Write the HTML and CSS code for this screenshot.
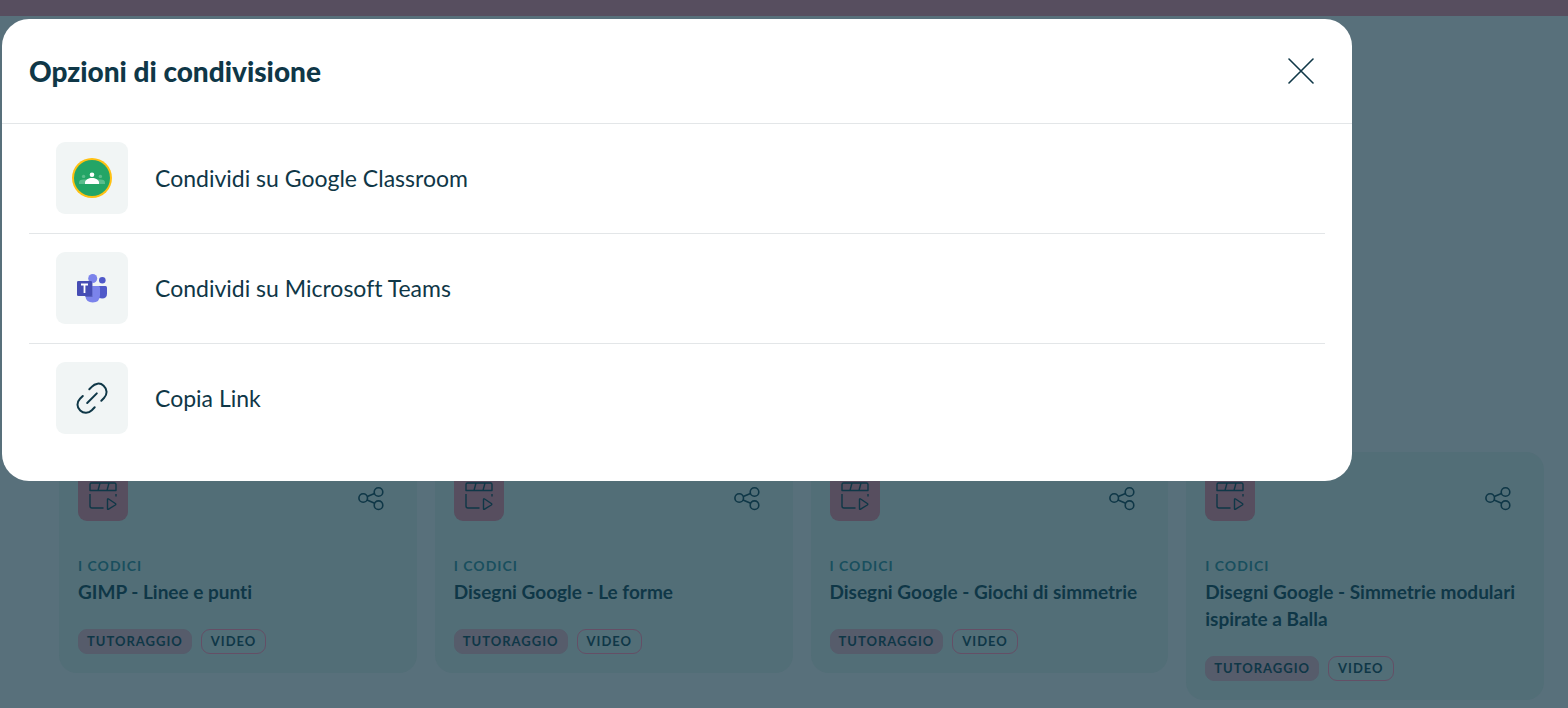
FILE: index.html
```html
<!DOCTYPE html>
<html lang="it">
<head>
<meta charset="utf-8">
<meta name="viewport" content="width=device-width, initial-scale=1">
<title>Opzioni di condivisione</title>
<link rel="stylesheet" href="styles.css">
</head>
<body>
<svg class="sprite" aria-hidden="true">
  <symbol id="video" viewBox="0 0 30 30">
    <path d="M2 9.500V3.500Q2 2 3.500 2H26.500Q28 2 28 3.500V9.500Z M12 2 10 9.500 M21 2 19 9.500 M2 13V25Q2 27 4 27H15.500 M28 13V15.500 M19.500 18.500V27.500Q19.500 28.800 20.600 28.100L27.300 24Q28.300 23.200 27.300 22.500L20.600 18Q19.500 17.400 19.500 18.500Z"/>
  </symbol>
  <symbol id="share" viewBox="0 0 26 26">
    <circle cx="5.200" cy="13" r="4.300"/><circle cx="20.500" cy="7" r="4.300"/><circle cx="20.500" cy="20.200" r="4.300"/>
    <path d="M9.300 11.500 16.500 8.600 M9 15 16.700 18.300"/>
  </symbol>
</svg>
<header class="topbar"></header>
<main class="results">
  <article class="card">
    <div class="card-top"><span class="type"><svg><use href="#video"/></svg></span><button class="share" aria-label="Condividi"><svg><use href="#share"/></svg></button></div>
    <p class="series">I CODICI</p>
    <h2 class="title">GIMP - Linee e punti</h2>
    <div class="tags"><span class="tag filled">TUTORAGGIO</span><span class="tag">VIDEO</span></div>
  </article>
  <article class="card">
    <div class="card-top"><span class="type"><svg><use href="#video"/></svg></span><button class="share" aria-label="Condividi"><svg><use href="#share"/></svg></button></div>
    <p class="series">I CODICI</p>
    <h2 class="title">Disegni Google - Le forme</h2>
    <div class="tags"><span class="tag filled">TUTORAGGIO</span><span class="tag">VIDEO</span></div>
  </article>
  <article class="card">
    <div class="card-top"><span class="type"><svg><use href="#video"/></svg></span><button class="share" aria-label="Condividi"><svg><use href="#share"/></svg></button></div>
    <p class="series">I CODICI</p>
    <h2 class="title">Disegni Google - Giochi di simmetrie</h2>
    <div class="tags"><span class="tag filled">TUTORAGGIO</span><span class="tag">VIDEO</span></div>
  </article>
  <article class="card">
    <div class="card-top"><span class="type"><svg><use href="#video"/></svg></span><button class="share" aria-label="Condividi"><svg><use href="#share"/></svg></button></div>
    <p class="series">I CODICI</p>
    <h2 class="title">Disegni Google - Simmetrie modulari ispirate a Balla</h2>
    <div class="tags"><span class="tag filled">TUTORAGGIO</span><span class="tag">VIDEO</span></div>
  </article>
</main>
<section class="modal" role="dialog" aria-modal="true" aria-labelledby="modal-title">
  <div class="modal-head">
    <h1 class="modal-title" id="modal-title">Opzioni di condivisione</h1>
    <button class="close" aria-label="Chiudi"><svg viewBox="0 0 26 26"><path d="M1 1 25 25M25 1 1 25"/></svg></button>
  </div>
  <ul class="options">
    <li class="option"><button class="option-button">
      <span class="tile"><svg class="classroom" viewBox="0 0 40 40">
        <circle cx="20" cy="20" r="20" fill="#ffc112"/><circle cx="20" cy="20" r="18" fill="#23a566"/>
        <g fill="#5bbd8c"><circle cx="11.600" cy="18.400" r="1.700"/><circle cx="28.400" cy="18.400" r="1.700"/><path d="M7 26V24.500Q7 21.500 11.500 21.500H28.500Q33 21.500 33 24.500V26Z"/></g>
        <circle cx="20" cy="16.700" r="2.300" fill="#fff"/><path d="M13 26V24.500C13 21.800 16.500 20 20 20S27 21.800 27 24.500V26Z" fill="#fff"/>
      </svg></span><span>Condividi su Google Classroom</span></button></li>
    <li class="option"><button class="option-button">
      <span class="tile"><svg class="teams" viewBox="0 0 32 32">
        <circle cx="26.300" cy="8.200" r="3.300" fill="#5059c9"/>
        <path d="M20 14H29.500Q31 14 31 15.500V21.500Q31 26.500 26 26.500Q20 26.500 20 20Z" fill="#5059c9"/>
        <circle cx="16.700" cy="6.500" r="4.500" fill="#7b83eb"/>
        <path d="M10 14H22.500Q24 14 24 15.500V23Q24 30.500 16.700 30.500Q10 30.500 9.300 24Z" fill="#7b83eb"/>
        <path d="M16.500 11V25H9.500V11Z" fill="#5b63bd"/>
        <rect x="1" y="9" width="15" height="15" rx="1.300" fill="#464db4"/>
        <path d="M5 12.500H12M8.500 12.500V21" fill="none" stroke="#fff" stroke-width="1.800"/>
      </svg></span><span>Condividi su Microsoft Teams</span></button></li>
    <li class="option"><button class="option-button">
      <span class="tile"><svg class="link" viewBox="0 0 32 32">
        <path d="M13.300 7.300 15.700 4.900C19 1.300 24 .3 27.600 3.700C31.500 7.300 31.500 12.500 28 16L25.300 18.700M6.800 14 4 16.800C.5 20.400.7 25.300 4.200 28.600C7.700 31.800 12.500 31.500 15.800 28.300L18.700 25.300M11.200 21 20.800 11.400"/>
      </svg></span><span>Copia Link</span></button></li>
  </ul>
</section>
</body>
</html>
```

FILE: styles.css
```css
* { box-sizing: border-box; }

body {
  margin: 0;
  min-height: 100vh;
  position: relative;
  background: #58707b;
  color: #0f3747;
  font-family: Lato, "Open Sans", sans-serif;
  font-variant-ligatures: none;
}

h1, h2, p, ul { margin: 0; padding: 0; }
ul { list-style: none; }

button {
  padding: 0;
  border: 0;
  background: none;
  color: inherit;
  font: inherit;
  font-variant-ligatures: none;
  cursor: pointer;
}

svg { display: block; }
.sprite { position: absolute; width: 0; height: 0; }

.topbar { height: 16px; background: #574e5f; }

.results {
  display: grid;
  grid-template-columns: repeat(4, 1fr);
  align-items: start;
  gap: 18px;
  padding: 436px 24px 9px 59px;
}

.card {
  padding: 19px;
  border-radius: 18px;
  background: #526e77;
}

.card-top {
  display: flex;
  align-items: flex-end;
  justify-content: space-between;
  padding-right: 14px;
  margin-bottom: 36px;
}

.type {
  display: grid;
  place-items: center;
  width: 50px;
  height: 50px;
  border-radius: 9px;
  background: #574e5f;
}

.share { padding-bottom: 10px; }
.type svg, .share svg { fill: none; stroke: #0f3747; stroke-linejoin: round; }
.type svg { width: 30px; height: 30px; stroke-width: 1.4; }
.share svg { width: 26px; height: 26px; stroke-width: 1.6; }

.series {
  color: #194f5e;
  font-size: 14px;
  font-weight: 700;
  line-height: 18px;
  letter-spacing: 1px;
}

.title {
  padding-top: 3px;
  font-size: 19px;
  font-weight: 700;
  line-height: 27px;
}

.tags { display: flex; gap: 9px; margin-top: 24px; }

.tag {
  padding: 0 9px;
  border: 1px solid #644f66;
  border-radius: 9px;
  font-size: 13px;
  font-weight: 700;
  line-height: 23px;
  letter-spacing: 1px;
}
.tag.filled { padding: 0 8px; background: #565c6b; border-color: #565c6b; }

.modal {
  position: absolute;
  top: 19px;
  left: 2px;
  width: calc(100% - 4px);
  max-width: 1350px;
  padding-bottom: 28px;
  border-radius: 27px;
  background: #fff;
}

.modal-head {
  display: flex;
  align-items: center;
  justify-content: space-between;
  padding: 34px 38px 34px 27px;
  border-bottom: 1px solid #e3e6e8;
}

.modal-title { font-size: 28px; font-weight: 900; line-height: 36px; }
.close svg { width: 26px; height: 26px; fill: none; stroke: #0f3747; stroke-width: 1.6; stroke-linecap: round; }

.options { padding: 0 27px; }
.option { border-bottom: 1px solid #e3e6e8; }
.option:last-child { border-bottom: 0; }

.option-button {
  display: flex;
  align-items: center;
  gap: 27px;
  width: 100%;
  padding: 18px 27px 19px;
  font-size: 23px;
  line-height: 36px;
  text-align: left;
}

.tile {
  display: grid;
  place-items: center;
  width: 72px;
  height: 72px;
  border-radius: 9px;
  background: #f1f5f5;
}

.classroom { width: 40px; height: 40px; }
.teams, .link { width: 32px; height: 32px; }
.link { fill: none; stroke: #0f3747; stroke-width: 2; stroke-linecap: round; }
```
